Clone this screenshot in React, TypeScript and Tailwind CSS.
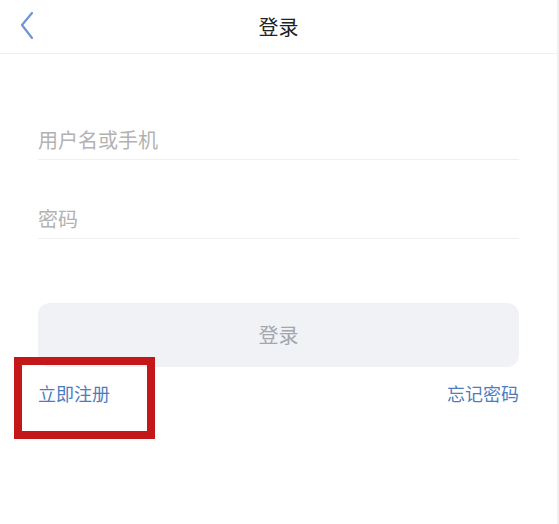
export default function App() {
  return (
    <div
      className="relative w-[559px] h-[524px] bg-white border-r-2 border-[#f0f0f0]"
      style={{ fontFamily: '"Noto Sans CJK SC", "Noto Sans", sans-serif' }}
    >
      <div className="relative flex items-center justify-center h-[54px] border-b border-[#efefef]">
        <button className="absolute left-[15px] top-[9px] w-[26px] h-[34px] flex items-center justify-center">
          <svg width="16" height="30" viewBox="0 0 16 30" fill="none">
            <path d="M12 2 L2 14 L12 27" stroke="#6d95d8" strokeWidth="2.2" strokeLinecap="round" strokeLinejoin="round" />
          </svg>
        </button>
        <h1 className="text-[20px] text-[#222] leading-none">登录</h1>
      </div>

      <div className="pl-[38px] pr-[38px] pt-[66px]">
        <div className="h-[40px] flex items-center border-b border-[#f0f0f0]">
          <input
            className="w-full outline-none bg-transparent text-[20px] placeholder:text-[#b2b2b2]"
            placeholder="用户名或手机"
          />
        </div>
        <div className="mt-[39px] h-[40px] flex items-center border-b border-[#f0f0f0]">
          <input
            type="password"
            className="w-full outline-none bg-transparent text-[20px] placeholder:text-[#b2b2b2]"
            placeholder="密码"
          />
        </div>

        <button className="mt-[64px] w-full h-[64px] rounded-[12px] bg-[#f1f2f5] text-[20px] text-[#a3a6ad]">
          登录
        </button>

        <div className="mt-[17px] flex justify-between text-[18px] text-[#4d7dbd] leading-none">
          <span>立即注册</span>
          <span>忘记密码</span>
        </div>
      </div>

      <div className="absolute left-[14px] top-[357px] w-[141px] h-[82px] border-[8px] border-[#c3171a] pointer-events-none" />
    </div>
  );
}
